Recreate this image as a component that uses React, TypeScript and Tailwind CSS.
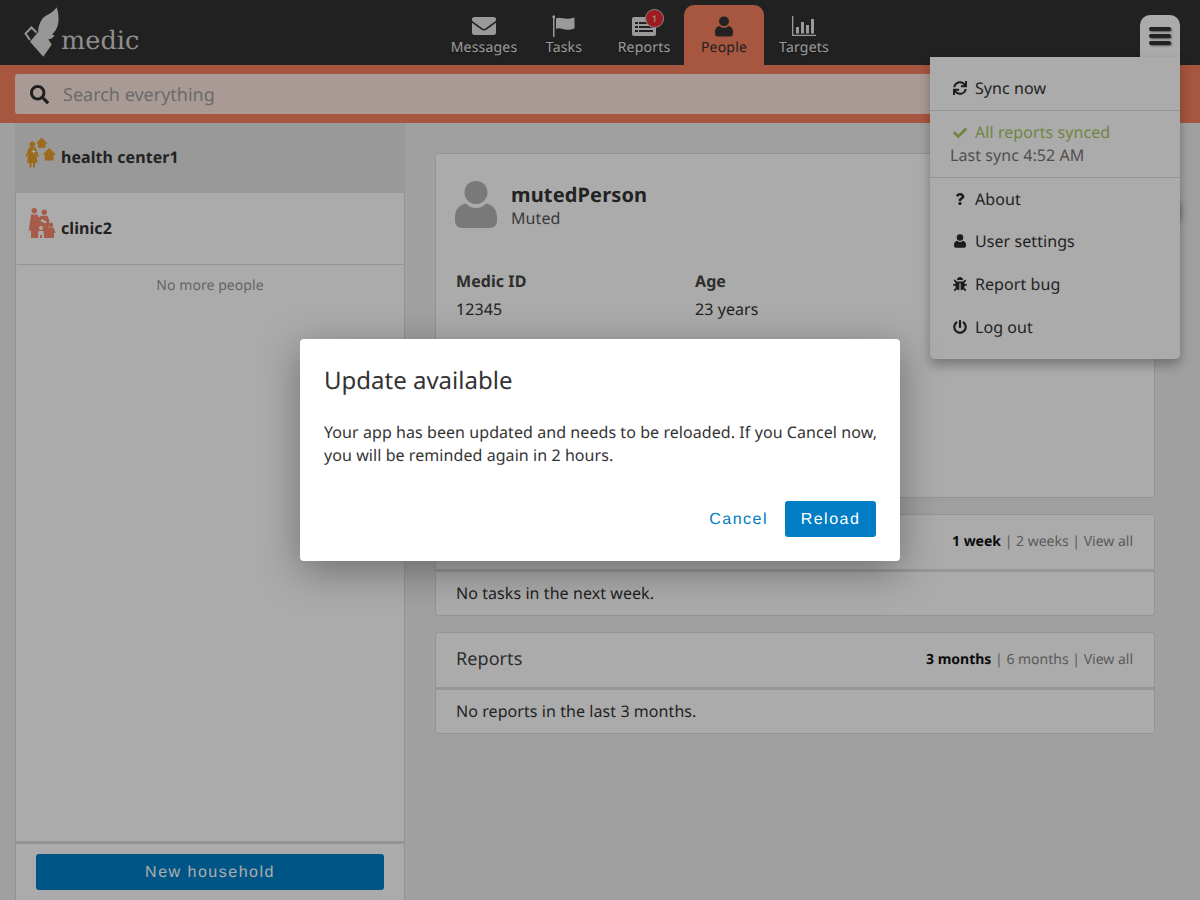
import React from "react";
import { FaEnvelope, FaSearch, FaSync, FaCheck, FaQuestion, FaBug, FaPowerOff } from "react-icons/fa";

const UserIcon = ({ className }: { className?: string }) => (
  <svg viewBox="0 0 42 47" className={className} fill="currentColor">
    <circle cx="21" cy="11.5" r="11.5" />
    <path d="M0 36C0 28 5 23.5 11 22.5C14 25.500 17 27 21 27C25 27 28 25.500 31 22.500C37 23.500 42 28 42 36V40C42 44 39 47 35 47H7C3 47 0 44 0 40Z" />
  </svg>
);

const FlagIcon = () => (
  <svg viewBox="0 0 24 22" className="w-6 h-[22px]" fill="currentColor">
    <rect x="1" y="2" width="1.500" height="20" />
    <circle cx="1.750" cy="1.800" r="1.500" />
    <path d="M4 3.500C9 1 12 6 22.500 2.500V13.500C12 17 9 11.500 4 14Z" />
  </svg>
);

const ReportsIcon = () => (
  <svg viewBox="0 0 24 20" className="w-6 h-5">
    <rect width="24" height="19" y="1" rx="2" fill="currentColor" />
    <path d="M3 6h3v2H3zM7 6h14v2H7zM3 10h3v2H3zM7 10h14v2H7zM3 14h3v2H3zM7 14h14v2H7z" fill="#2f2f2f" />
  </svg>
);

const TargetsIcon = () => (
  <svg viewBox="0 0 24 20" className="w-6 h-5" fill="currentColor">
    <path d="M0 0h1.300v18.700H24V20H0z" />
    <path d="M4 11h3v6.500H4zM9 6h3v11.500H9zM14 9h3v8.500h-3zM19 3h3v14.500h-3z" />
  </svg>
);

const HealthCenterIcon = () => (
  <svg viewBox="0 0 31 31" className="w-[31px] h-[31px] absolute left-[10px] top-[14px]" fill="#e99e2a">
    <circle cx="7.300" cy="7.300" r="2.800" />
    <path d="M4 10.300H10.500L14 19.500L12.500 20.200L11 16.500L12.500 26H10V30.500H8V26H6.500V30.500H4.500V26H2L3.500 16.500L1.800 20.200L0.500 19.500Z" />
    <path d="M16.700 0.500L22.500 6.500H20.500V10.800H13V6.500H11Z" />
    <path d="M24 11L31 17.500H28.500V23.500H19.800V17.500H17.500Z" />
    <path d="M6.500 14h1.600v-1.500h1.100v1.500h1.500v1h-1.500v1.500H8.100V15H6.500z" fill="#fff" />
  </svg>
);

const ClinicIcon = () => (
  <svg viewBox="0 0 28 32" className="w-7 h-8 absolute left-[11px] top-[14px]" fill="#f98a6e">
    <circle cx="6.300" cy="3.700" r="2.700" />
    <circle cx="16.300" cy="5.300" r="2.700" />
    <circle cx="23" cy="18" r="2.200" />
    <path d="M3 7.500H9.500L11 10.500L13 8.800H19.500L21.500 14L20.500 20.500H25.500L27.500 26H26V31H3V23.500H0.800Z" />
    <circle cx="13" cy="21" r="2" fill="#fff" />
    <path d="M10.500 24H15.500L16 31H14V28H12V31H10Z" fill="#fff" />
    <path d="M13.500 12L18.500 14.500L17.500 16.500L12.500 14Z" fill="#fff" />
  </svg>
);

const Logo = () => (
  <div className="flex items-start w-[444px] pl-5 pt-[5px]">
    <svg viewBox="0 0 40 55" className="w-10 h-[55px] shrink-0 text-[#e0e0e0]" fill="currentColor">
      <path d="M36.700 2.300C38.500 8 39 14 38.300 18C37.500 23 35 27 32 29.500L34.500 30.500C33 33 30.500 34.500 28.300 34.300L31.700 39.500L23.300 51.700L10 36.700L18.300 26.700C18 22 20 16.500 23 13C27 9.500 33 8 36.700 2.300Z" />
      <path d="M10 35L5.500 28.500L11.500 22.500L16.500 27.500" fill="none" stroke="currentColor" strokeWidth="2" />
    </svg>
    <span className="text-[25.500px] leading-none mt-[24px] ml-[1px] text-[#d4d4d4] font-['DejaVu_Serif',serif]">medic</span>
  </div>
);

const NavTab = ({ label, icon, active }: { label: string; icon: React.ReactNode; active?: boolean }) => (
  <div className={"relative w-20 h-[60px] mt-[5px] flex flex-col items-center rounded-t-[10px] " + (active ? "bg-[#f9805f] text-[#333]" : "text-[#e6e6e6] [&>div:last-child]:[text-shadow:0_1px_1px_rgba(0,0,0,0.5)]")}>
    <div className="h-[22px] mt-[10px] flex items-center justify-center">{icon}</div>
    <div className="text-sm leading-[20px] mt-[1px] tracking-[0.2px]">{label}</div>
  </div>
);

const MenuItem = ({ icon, label, h }: { icon: React.ReactNode; label: string; h: string }) => (
  <div className={"flex items-center pl-5 text-[#333] " + h}>
    <span className="w-5 flex justify-center mr-[5px] text-[#2a2a2a]">{icon}</span>
    <span>{label}</span>
  </div>
);

const Section = ({ title, first, second, empty }: { title: string; first: string; second: string; empty: string }) => (
  <div className="bg-white border border-[#ddd] rounded-[3px] mb-4">
    <div className="h-[57px] flex items-center justify-between pl-5 pr-[21px] border-b-[3px] border-[#e0e0e0]">
      <span className="text-lg text-[#444] -mt-[3px]">{title}</span>
      <span className="text-sm text-[#888] tracking-normal">
        <b className="font-bold text-[#111]">{first}</b> | {second} | View all
      </span>
    </div>
    <div className="h-[43px] flex items-center px-5 pb-[2px] text-[#333]">{empty}</div>
  </div>
);

const App = () => {
  return (
    <div className="relative h-[900px] w-[1200px] overflow-hidden bg-[#efefef] font-['Noto_Sans',sans-serif] [text-rendering:geometricPrecision] tracking-[0.07px] text-base text-[#333]">
      <header className="h-[65px] bg-[#323232] flex">
        <Logo />
        <nav className="flex">
          <NavTab label="Messages" icon={<FaEnvelope className="w-6 h-6" />} />
          <NavTab label="Tasks" icon={<FlagIcon />} />
          <NavTab
            label="Reports"
            icon={
              <div className="relative">
                <ReportsIcon />
                <span className="absolute -top-[7px] left-[13px] w-[19px] h-[19px] rounded-full bg-[#e92a2f] border border-[#ccc] text-white text-[9px] leading-[17px] text-center">1</span>
              </div>
            }
          />
          <NavTab label="People" active icon={<UserIcon className="w-[18px] h-[21px]" />} />
          <NavTab label="Targets" icon={<TargetsIcon />} />
        </nav>
        <div className="ml-auto mr-5 mt-[15px] w-10 h-[50px] bg-white rounded-t-[10px] flex justify-center pt-[12px]">
          <div className="flex flex-col gap-[3px] h-fit">
            <span className="block w-[22px] h-[4px] rounded-[2px] bg-[#333] shadow-[1px_1px_2px_rgba(0,0,0,0.5)]" />
            <span className="block w-[22px] h-[4px] rounded-[2px] bg-[#333] shadow-[1px_1px_2px_rgba(0,0,0,0.5)]" />
            <span className="block w-[22px] h-[4px] rounded-[2px] bg-[#333] shadow-[1px_1px_2px_rgba(0,0,0,0.5)]" />
          </div>
        </div>
      </header>

      <div className="h-[58px] bg-[#f9805f] pl-[15px] pr-[60px] pt-[9px]">
        <div className="h-10 bg-white/80 rounded-[3px] flex items-center pl-[15px]">
          <FaSearch className="w-[19px] h-[19px] text-[#2f2f2f]" />
          <span className="ml-[14px] mt-[2px] text-lg text-[#a0a0a0] tracking-normal">Search everything</span>
        </div>
      </div>

      <div className="flex h-[777px]">
        <aside className="ml-[15px] w-[390px] bg-white border-x border-[#ddd] flex flex-col">
          <div className="relative h-[70px] -mx-px bg-[#e4e4e4] flex items-center pl-[46px] pb-[2px] font-bold">
            <HealthCenterIcon />
            health center1
          </div>
          <div className="relative h-[72px] ml-[1px] border-b border-[#ddd] flex items-center pl-[44px] pb-[1px] font-bold">
            <ClinicIcon />
            clinic2
          </div>
          <div className="text-sm text-[#999] text-center mt-[11px]">No more people</div>
          <div className="mt-auto h-[59px] border-t-[3px] border-[#ddd] flex justify-center pt-[10px]">
            <div className="w-[348px] h-9 bg-[#007fc9] rounded-[3px] text-white text-center leading-[38px] tracking-[1.5px] font-['Liberation_Sans',sans-serif]">New household</div>
          </div>
        </aside>

        <main className="flex-1 pl-[30px] pr-[45px] pt-[30px]">
          <div className="h-[345px] bg-white border border-[#ddd] rounded-[3px] px-5 pt-[27px] mb-4">
            <div className="flex items-start">
              <UserIcon className="w-[42px] h-[47px] text-[#b5b5b5] shrink-0 -ml-px" />
              <div className="ml-[14px] -mt-[1px]">
                <div className="text-xl font-bold leading-[30px] text-[#333] tracking-[0.15px]">mutedPerson</div>
                <div className="leading-[17px] text-[#555]">Muted</div>
              </div>
            </div>
            <div className="flex mt-[41px]">
              <div className="w-[239px]">
                <div className="font-bold leading-6 text-[#444]">Medic ID</div>
                <div className="mt-1 leading-6">12345</div>
              </div>
              <div>
                <div className="font-bold leading-6 text-[#444]">Age</div>
                <div className="mt-1 leading-6">23 years</div>
              </div>
            </div>
          </div>
          <Section title="Tasks" first="1 week" second="2 weeks" empty="No tasks in the next week." />
          <Section title="Reports" first="3 months" second="6 months" empty="No reports in the last 3 months." />
        </main>
      </div>

      <div className="absolute left-[1140px] top-[192px] w-10 h-10 rounded-full bg-white shadow-[0_0_6px_rgba(0,0,0,0.5)]" />

      <div className="absolute left-[930px] top-[57px] w-[250px] h-[302px] bg-white rounded-b-[5px] shadow-[0_6px_12px_rgba(0,0,0,0.3)] pt-2">
        <MenuItem h="h-[45px]" icon={<FaSync className="w-[14px] h-[14px]" />} label="Sync now" />
        <div className="border-t border-[#ddd] h-[67px] pt-[10px]">
          <div className="flex items-center pl-5 text-[#a9c766] leading-[23px]">
            <span className="w-5 flex justify-center mr-[5px]"><FaCheck className="w-[14px] h-[14px]" /></span>
            All reports synced
          </div>
          <div className="pl-5 text-[#777] leading-[23px]">Last sync 4:52 AM</div>
        </div>
        <div className="border-t border-[#ddd]">
          <MenuItem h="h-[42px]" icon={<FaQuestion className="w-3 h-3" />} label="About" />
          <MenuItem h="h-[42px]" icon={<UserIcon className="w-3 h-[14px]" />} label="User settings" />
          <MenuItem h="h-[43px]" icon={<FaBug className="w-[14px] h-[14px]" />} label="Report bug" />
          <MenuItem h="h-[43px]" icon={<FaPowerOff className="w-[14px] h-[14px]" />} label="Log out" />
        </div>
      </div>

      <div className="absolute inset-0 bg-black/33" />

      <div className="absolute inset-0 flex items-center justify-center">
        <div className="w-[600px] h-[222px] bg-white rounded-[4px] shadow-[0_10px_40px_rgba(0,0,0,0.35)] px-6 pt-6 flex flex-col">
          <div className="text-2xl leading-[34px] mt-[1px] tracking-normal text-[#333]">Update available</div>
          <div className="mt-[23px] -mr-3 text-base leading-[23px] text-[#333]">
            Your app has been updated and needs to be reloaded. If you Cancel now, you will be reminded again in 2 hours.
          </div>
          <div className="flex justify-end items-center mt-auto mb-6 font-['Liberation_Sans',sans-serif] tracking-[1.5px]">
            <span className="text-[#007dc5] mr-[17px] pt-[1px]">Cancel</span>
            <div className="w-[91px] h-9 bg-[#007dc5] rounded-[3px] text-white text-center leading-[38px]">Reload</div>
          </div>
        </div>
      </div>
    </div>
  );
};

export default App;
